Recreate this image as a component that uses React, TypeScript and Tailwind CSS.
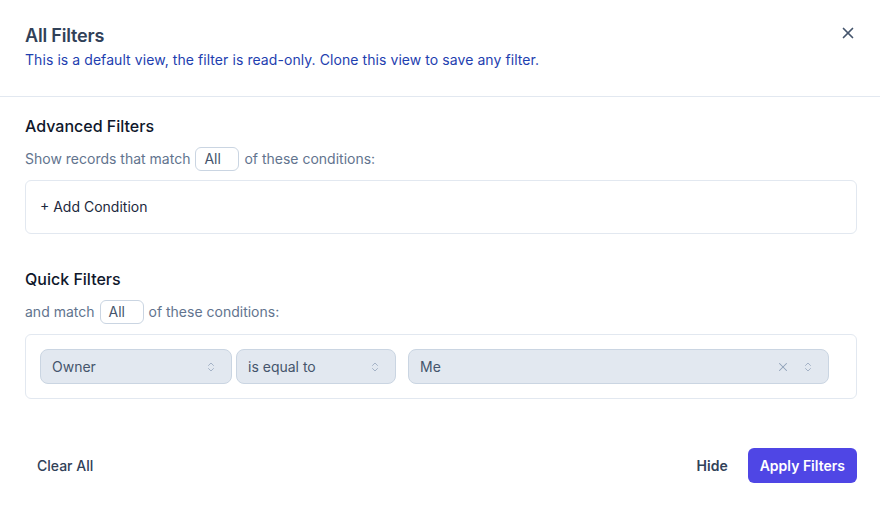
import { X, ChevronsUpDown } from "lucide-react";

const MatchSelect = () => (
  <span className="mx-[5px] inline-flex h-6 w-11 items-center rounded-md border border-slate-300 bg-white px-2 text-sm text-slate-600">
    All
  </span>
);

const FieldSelect = ({ label, className, clearable }: { label: string; className: string; clearable?: boolean }) => (
  <div
    className={`flex h-[35px] items-center justify-between rounded-lg border border-slate-300 bg-slate-200 pl-[11px] pr-[14px] text-sm text-slate-600 ${className}`}
  >
    <span>{label}</span>
    <div className="flex items-center gap-3 text-slate-400">
      {clearable && <X size={14} strokeWidth={1.75} />}
      <ChevronsUpDown size={12} strokeWidth={1.5} />
    </div>
  </div>
);

export default function App() {
  return (
    <div className="h-[513px] w-[880px] bg-white" style={{ fontFamily: "Inter, 'Noto Sans', sans-serif" }}>
      <header className="flex items-start justify-between border-b border-slate-200 pb-[26px] pl-[25px] pr-[23px] pt-[22px]">
        <div>
          <h1 className="text-lg font-semibold leading-7 tracking-[-0.01em] text-slate-700">All Filters</h1>
          <p className="text-sm leading-5 tracking-[0.005em] text-[#1e40af]">
            This is a default view, the filter is read-only. Clone this view to save any filter.
          </p>
        </div>
        <button className="mt-[2px] text-slate-600">
          <X size={18} strokeWidth={2.25} />
        </button>
      </header>

      <section className="pl-[25px] pr-[23px] pt-[17px]">
        <h2 className="text-base font-medium leading-6 text-slate-900">Advanced Filters</h2>
        <div className="mt-[9px] flex items-center text-sm text-slate-500">
          Show records that match
          <MatchSelect />
          of these conditions:
        </div>
        <div className="mt-[9px] flex h-[54px] items-center rounded-md border border-slate-200 px-[14px] text-sm text-slate-800">
          + Add Condition
        </div>

        <h2 className="mt-[33px] text-base font-medium leading-6 text-slate-900">Quick Filters</h2>
        <div className="mt-[9px] flex items-center text-sm text-slate-500">
          and match
          <MatchSelect />
          of these conditions:
        </div>
        <div className="mt-[10px] flex items-center rounded-md border border-slate-200 py-[14px] pl-[14px] pr-[27px]">
          <FieldSelect label="Owner" className="w-[192px]" />
          <FieldSelect label="is equal to" className="ml-1 w-[160px]" />
          <FieldSelect label="Me" className="ml-3 flex-1" clearable />
        </div>
      </section>

      <footer className="mt-[49px] flex items-center justify-between pl-[25px] pr-[23px]">
        <button className="px-3 text-sm font-medium text-slate-700">Clear All</button>
        <div className="flex items-center gap-2">
          <button className="px-3 text-sm font-semibold text-slate-700">Hide</button>
          <button className="h-[35px] rounded-md bg-[#4f46e5] px-3 text-sm font-semibold text-white">
            Apply Filters
          </button>
        </div>
      </footer>
    </div>
  );
}
